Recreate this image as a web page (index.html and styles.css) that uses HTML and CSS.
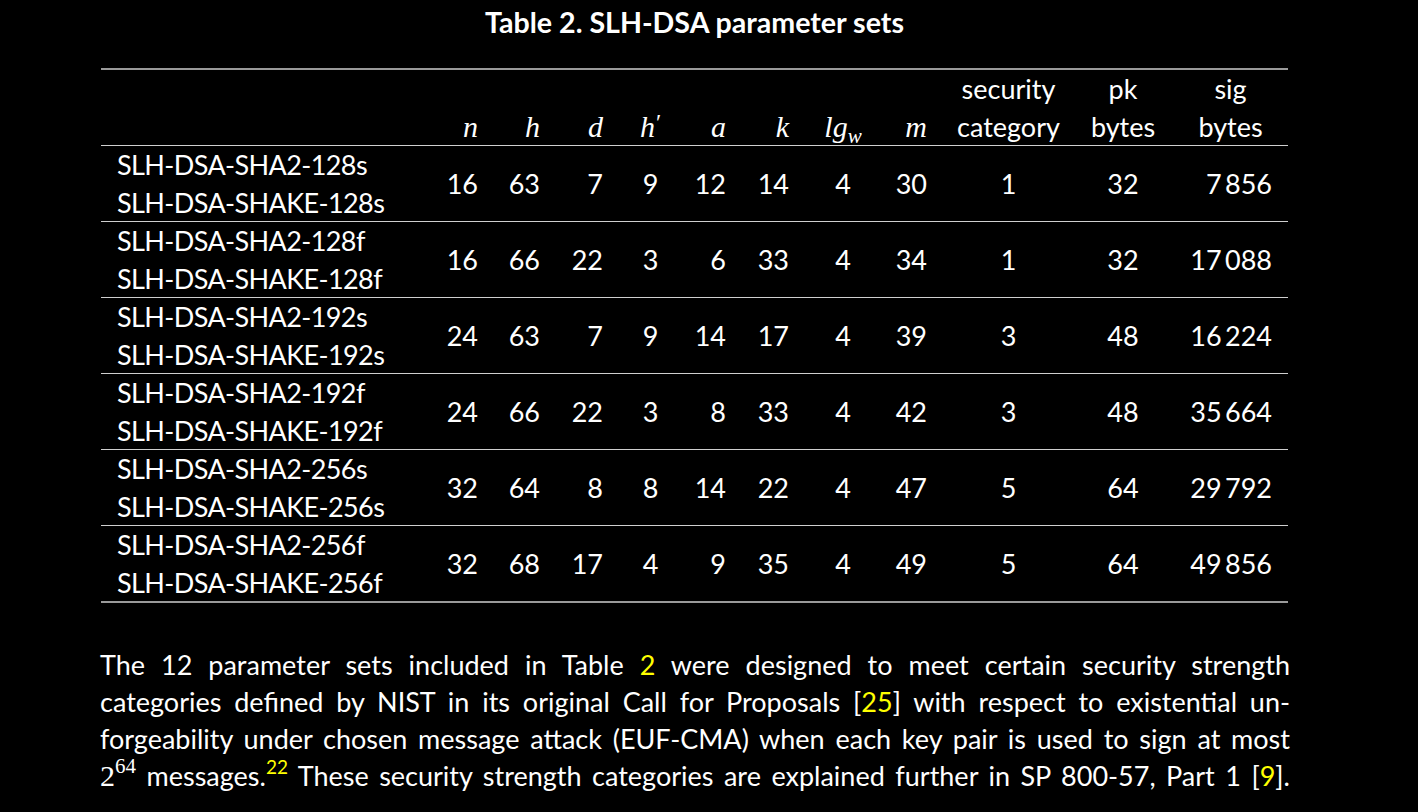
FILE: index.html
```html
<!DOCTYPE html>
<html lang="en">
<head>
<meta charset="utf-8">
<title>Table 2. SLH-DSA parameter sets</title>
<link rel="stylesheet" href="styles.css">
</head>
<body>
<main class="page">
  <h1 class="title">Table 2. SLH-DSA parameter sets</h1>
  <table class="params">
    <colgroup>
      <col class="w-name"><col class="w-63"><col class="w-62"><col class="w-63"><col class="w-61">
      <col class="w-62"><col class="w-63"><col class="w-74"><col class="w-64"><col class="w-129">
      <col class="w-100"><col class="w-115">
    </colgroup>
    <thead>
      <tr>
        <th class="name"></th>
        <th class="r"><i class="m">n</i></th>
        <th class="r"><i class="m">h</i></th>
        <th class="r"><i class="m">d</i></th>
        <th class="c"><i class="m">h<span class="prime">′</span></i></th>
        <th class="r"><i class="m">a</i></th>
        <th class="r"><i class="m">k</i></th>
        <th class="c"><i class="m">lg<sub>w</sub></i></th>
        <th class="r"><i class="m">m</i></th>
        <th class="c">security<br>category</th>
        <th class="c">pk<br>bytes</th>
        <th class="c">sig<br>bytes</th>
      </tr>
    </thead>
    <tbody>
      <tr>
        <td class="name">SLH-DSA-SHA2-128s<br>SLH-DSA-SHAKE-128s</td>
        <td class="r">16</td><td class="r">63</td><td class="r">7</td><td class="c">9</td><td class="r">12</td><td class="r">14</td><td class="c">4</td><td class="r">30</td><td class="c">1</td><td class="c">32</td><td class="rs">7&#8201;856</td>
      </tr>
      <tr>
        <td class="name">SLH-DSA-SHA2-128f<br>SLH-DSA-SHAKE-128f</td>
        <td class="r">16</td><td class="r">66</td><td class="r">22</td><td class="c">3</td><td class="r">6</td><td class="r">33</td><td class="c">4</td><td class="r">34</td><td class="c">1</td><td class="c">32</td><td class="rs">17&#8201;088</td>
      </tr>
      <tr>
        <td class="name">SLH-DSA-SHA2-192s<br>SLH-DSA-SHAKE-192s</td>
        <td class="r">24</td><td class="r">63</td><td class="r">7</td><td class="c">9</td><td class="r">14</td><td class="r">17</td><td class="c">4</td><td class="r">39</td><td class="c">3</td><td class="c">48</td><td class="rs">16&#8201;224</td>
      </tr>
      <tr>
        <td class="name">SLH-DSA-SHA2-192f<br>SLH-DSA-SHAKE-192f</td>
        <td class="r">24</td><td class="r">66</td><td class="r">22</td><td class="c">3</td><td class="r">8</td><td class="r">33</td><td class="c">4</td><td class="r">42</td><td class="c">3</td><td class="c">48</td><td class="rs">35&#8201;664</td>
      </tr>
      <tr>
        <td class="name">SLH-DSA-SHA2-256s<br>SLH-DSA-SHAKE-256s</td>
        <td class="r">32</td><td class="r">64</td><td class="r">8</td><td class="c">8</td><td class="r">14</td><td class="r">22</td><td class="c">4</td><td class="r">47</td><td class="c">5</td><td class="c">64</td><td class="rs">29&#8201;792</td>
      </tr>
      <tr>
        <td class="name">SLH-DSA-SHA2-256f<br>SLH-DSA-SHAKE-256f</td>
        <td class="r">32</td><td class="r">68</td><td class="r">17</td><td class="c">4</td><td class="r">9</td><td class="r">35</td><td class="c">4</td><td class="r">49</td><td class="c">5</td><td class="c">64</td><td class="rs">49&#8201;856</td>
      </tr>
    </tbody>
  </table>
  <p class="body-text">
    <span class="line">The 12 parameter sets included in Table <a class="ref" href="#">2</a> were designed to meet certain security strength</span>
    <span class="line">categories defined by NIST in its original Call for Proposals [<a class="ref" href="#">25</a>] with respect to existential un-</span>
    <span class="line">forgeability under chosen message attack (EUF-CMA) when each key pair is used to sign at most</span>
    <span class="line"><span class="mathnum">2<sup>64</sup></span> messages.<sup class="fn">22</sup> These security strength categories are explained further in SP 800-57, Part 1 [<a class="ref" href="#">9</a>].</span>
  </p>
</main>
</body>
</html>
```
FILE: styles.css
```css
html, body {
  margin: 0;
  background: #000;
}

body {
  color: #fff;
  font-family: Lato, "Open Sans", "DejaVu Sans", sans-serif;
  font-size: 27px;
}

.page {
  width: 1190px;
  margin-left: 100px;
}

.title {
  margin: 2px 0 0 0;
  width: 1189px;
  font-size: 28.6px;
  font-weight: 700;
  line-height: 40px;
  text-align: center;
}

.params {
  margin-top: 26px;
  margin-left: 1px;
  width: 1187px;
  table-layout: fixed;
  border-collapse: collapse;
  font-size: 27px;
}

.w-name { width: 331px; }
.w-61 { width: 61px; }
.w-62 { width: 62px; }
.w-63 { width: 63px; }
.w-64 { width: 64px; }
.w-74 { width: 74px; }
.w-100 { width: 100px; }
.w-115 { width: 115px; }
.w-129 { width: 129px; }

.params thead tr {
  border-top: 2px solid #9a9a9a;
  border-bottom: 1px solid #cfcfcf;
}

.params tbody tr {
  border-bottom: 1px solid #cfcfcf;
}

.params tbody tr:last-child {
  border-bottom: 2px solid #9a9a9a;
}

.params th,
.params td {
  padding: 0;
  font-weight: 400;
  line-height: 37.5px;
  white-space: nowrap;
}

.params th {
  vertical-align: bottom;
}

.params td {
  vertical-align: middle;
}

.params .name {
  text-align: left;
  padding-left: 16px;
  letter-spacing: -0.6px;
}

.params .r {
  text-align: right;
  padding-right: 17px;
}

.params .c {
  text-align: center;
}

.params .rs {
  text-align: right;
  padding-right: 16px;
}

.m {
  font-family: "Liberation Serif", "DejaVu Serif", serif;
  font-style: italic;
  font-size: 30px;
}

.m sub {
  font-size: 21px;
  line-height: 0;
  vertical-align: -6px;
}

.prime {
  font-style: normal;
  font-size: 24px;
  vertical-align: 7px;
  line-height: 0;
  margin-left: 1px;
}

.body-text {
  margin: 43px 0 0 0;
  width: 1190px;
  font-size: 27px;
  line-height: 37px;
}

.line {
  display: block;
  text-align: justify;
  text-align-last: justify;
}

.ref {
  color: #ffff00;
  text-decoration: none;
}

.fn {
  color: #ffff00;
  font-size: 19px;
  line-height: 0;
  vertical-align: 12px;
}

.mathnum {
  font-family: "Liberation Serif", "DejaVu Serif", serif;
  font-size: 30px;
}

.mathnum sup {
  font-size: 21px;
  line-height: 0;
  vertical-align: 13px;
}
```
